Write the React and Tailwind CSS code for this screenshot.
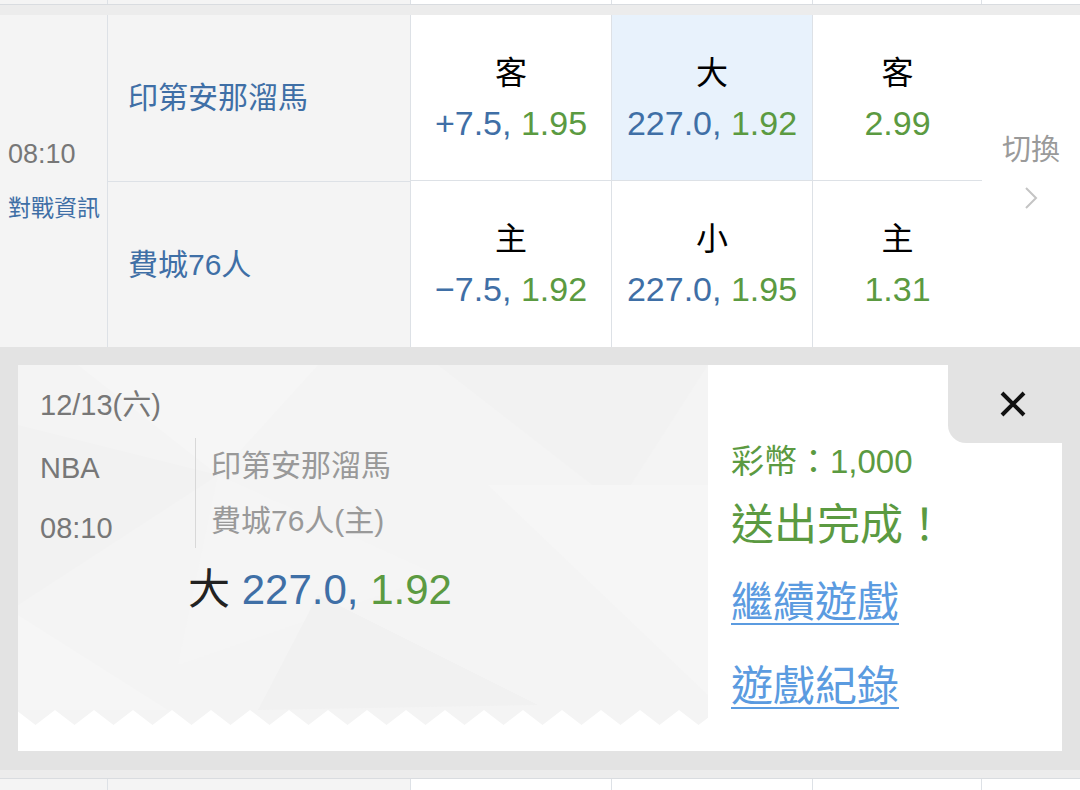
import React from 'react';

const FONT = "font-['Liberation_Sans','Noto_Sans_CJK_TC',sans-serif]";
const BLUE = 'text-[#3f6fa6]';
const GREEN = 'text-[#5b9a41]';

// top/bottom slivers of the neighbouring match rows
function StubRow({ h }) {
  return (
    <div className={`flex ${h}`}>
      <div className="w-[108px] bg-[#f4f4f4] border-r border-[#dde1e6]" />
      <div className="w-[303px] bg-[#f4f4f4] border-r border-[#dde1e6]" />
      <div className="w-[201px] bg-white border-r border-[#dde1e6]" />
      <div className="w-[201px] bg-white border-r border-[#dde1e6]" />
      <div className="w-[169px] bg-white border-r border-[#dde1e6]" />
      <div className="flex-1 bg-white" />
    </div>
  );
}

function Odds({ label, a, b, hl, last, top }) {
  return (
    <div className={`flex flex-col items-center justify-center ${hl ? 'bg-[#e8f2fc]' : 'bg-white'} ${last ? '' : 'border-r'} ${top ? 'border-b' : ''} border-[#dde1e6]`}>
      <div className="text-[32px] leading-[50px] text-black">{label}</div>
      <div className="text-[34px] leading-[50px] whitespace-nowrap">
        {a && <span className={BLUE}>{a}, </span>}
        <span className={GREEN}>{b}</span>
      </div>
    </div>
  );
}

function Pattern() {
  const pts = [];
  for (let x = 37 - 39 * 1; x < 720; x += 39) {
    pts.push(`${x - 19.5},360`, `${x},345`);
  }
  const zig = `0,0 690,0 690,360 ${pts.reverse().join(' ')} 0,360`;
  return (
    <svg className="absolute inset-0" width="690" height="386" viewBox="0 0 690 386">
      <rect width="690" height="386" fill="#ffffff" />
      <polygon points={zig} fill="#f4f4f4" />
      <polygon points="60,0 300,0 200,110" fill="#f6f6f6" />
      <polygon points="0,60 200,110 0,240" fill="#f2f2f2" />
      <polygon points="200,110 420,210 160,300" fill="#f5f5f5" />
      <polygon points="420,0 690,0 600,140" fill="#f2f2f2" />
      <polygon points="470,120 690,120 690,330" fill="#f6f6f6" />
      <polygon points="300,230 520,340 240,345" fill="#f1f1f1" />
      <polygon points="0,250 150,345 0,345" fill="#f6f6f6" />
    </svg>
  );
}

export default function App() {
  return (
    <div className={`w-[1080px] h-[790px] overflow-hidden bg-white ${FONT}`}>
      <StubRow h="h-[4px]" />
      <div className="h-[11px] bg-[#ececec] border-t border-[#d9dce0]" />

      {/* match row */}
      <div className="flex h-[332px]">
        <div className="w-[108px] bg-[#f4f4f4] border-r border-[#dde1e6] flex flex-col justify-center pl-[8px]">
          <div className="text-[27px] leading-[36px] text-[#777]">08:10</div>
          <div className={`text-[23px] leading-[36px] mt-[18px] whitespace-nowrap ${BLUE}`}>對戰資訊</div>
        </div>
        <div className="w-[303px] bg-[#f4f4f4] border-r border-[#dde1e6] flex flex-col">
          <div className={`flex-1 flex items-center pl-[20px] text-[30px] border-b border-[#dde1e6] ${BLUE}`}>印第安那溜馬</div>
          <div className={`flex-1 flex items-center pl-[20px] text-[30px] ${BLUE}`}>費城76人</div>
        </div>
        <div className="w-[571px] grid grid-cols-[201px_201px_169px] grid-rows-2 border-r border-[#dde1e6]">
          <Odds top label="客" a="+7.5" b="1.95" />
          <Odds top hl label="大" a="227.0" b="1.92" />
          <Odds top last label="客" b="2.99" />
          <Odds label="主" a="−7.5" b="1.92" />
          <Odds label="小" a="227.0" b="1.95" />
          <Odds last label="主" b="1.31" />
        </div>
        <div className="flex-1 flex flex-col items-center justify-center pb-[20px]">
          <div className="text-[29px] leading-[36px] text-[#9a9a9a]">切換</div>
          <svg className="mt-[18px]" width="14" height="24" viewBox="0 0 14 24">
            <path d="M2 2 L12 12 L2 22" fill="none" stroke="#c4c4c4" strokeWidth="2" />
          </svg>
        </div>
      </div>

      {/* result panel */}
      <div className="h-[423px] bg-[#e3e3e3] px-[18px] pt-[18px] pb-[19px]">
        <div className="flex h-full bg-white">
          <div className="relative w-[690px]">
            <Pattern />
            <div className="relative pl-[22px] pt-[20px]">
              <div className="text-[29px] leading-[40px] text-[#777]">12/13(六)</div>
              <div className="flex mt-[13px] h-[110px]">
                <div className="w-[155px] text-[29px] text-[#777]">
                  <div className="leading-[60px]">NBA</div>
                  <div className="leading-[60px]">08:10</div>
                </div>
                <div className="border-l border-[#d8d8d8] pl-[15px] text-[30px] text-[#999]">
                  <div className="leading-[55px]">印第安那溜馬</div>
                  <div className="leading-[55px]">費城76人(主)</div>
                </div>
              </div>
              <div className="ml-[148px] mt-[17px] text-[42px] leading-[50px] whitespace-nowrap">
                <span className="text-[#222]">大 </span>
                <span className={BLUE}>227.0, </span>
                <span className={GREEN}>1.92</span>
              </div>
            </div>
          </div>
          <div className="relative flex-1 pl-[23px] pt-[75px]">
            <div className="absolute top-0 right-0 w-[114px] h-[78px] bg-[#e3e3e3] rounded-bl-[18px] flex items-center justify-center pl-[16px]">
              <svg width="28" height="28" viewBox="0 0 28 28">
                <path d="M3 3 L25 25 M25 3 L3 25" stroke="#111" strokeWidth="4" />
              </svg>
            </div>
            <div className={`text-[33px] leading-[44px] ${GREEN}`}>彩幣：1,000</div>
            <div className={`text-[43px] leading-[64px] mt-[9px] ${GREEN}`}>送出完成！</div>
            <div className="text-[42px] leading-[56px] mt-[18px] text-[#5b9be0] underline underline-offset-[6px] decoration-2">繼續遊戲</div>
            <div className="text-[42px] leading-[56px] mt-[28px] text-[#5b9be0] underline underline-offset-[6px] decoration-2">遊戲紀錄</div>
          </div>
        </div>
      </div>

      <div className="h-[9px] bg-[#ececec] border-b border-[#d9dce0]" />
      <StubRow h="h-[12px]" />
    </div>
  );
}
